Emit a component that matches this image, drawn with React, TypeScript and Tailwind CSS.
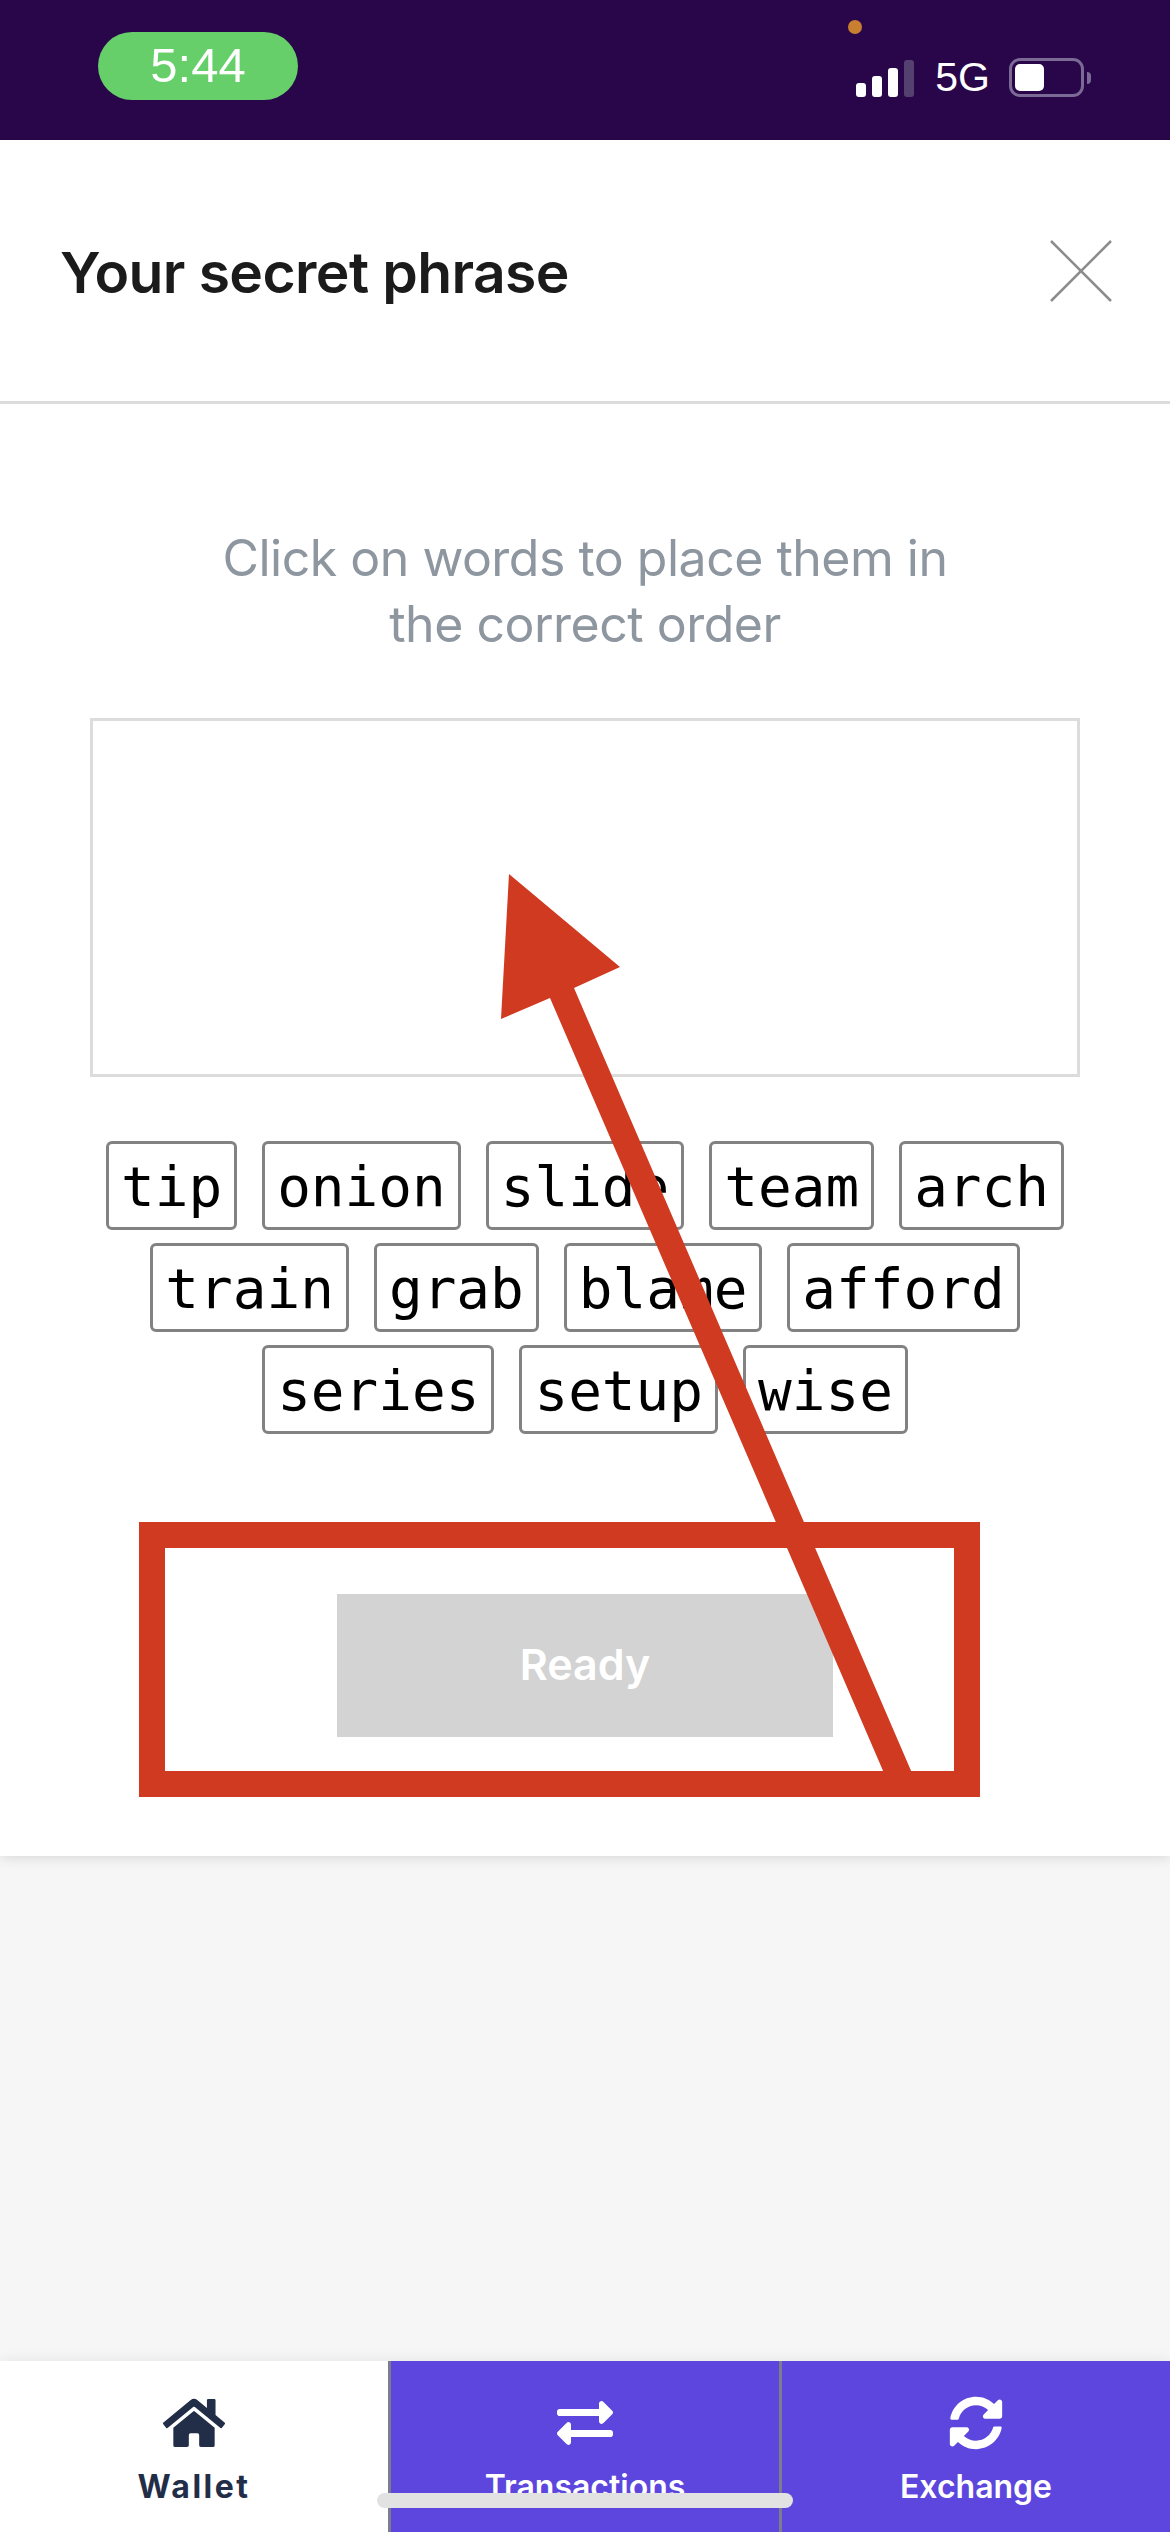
import { FaHome, FaExchangeAlt, FaSyncAlt } from "react-icons/fa";

const words = ["tip", "onion", "slide", "team", "arch", "train", "grab", "blame", "afford", "series", "setup", "wise"];

function NavItem({ icon, label, active }: { icon: React.ReactNode; label: string; active?: boolean }) {
  return (
    <div
      className={
        active
          ? "flex-1 bg-white text-[#222e48] flex flex-col items-center pt-[34px] font-bold tracking-[2.5px]"
          : "flex-1 bg-[#5c46de] text-white flex flex-col items-center pt-[34px] font-semibold border-l-[3px] border-[#7c7c8c]"
      }
    >
      <div className="h-[56px] flex items-center justify-center">{icon}</div>
      <div className="mt-[16px] text-[32px] leading-[40px]">{label}</div>
    </div>
  );
}

export default function App() {
  return (
    <div className="relative w-[1170px] h-[2532px] flex flex-col overflow-hidden bg-[#f6f6f6] font-['Inter',sans-serif]">
      <div className="h-[140px] bg-[#29064a] flex items-start justify-between pl-[98px] pr-[79px] relative">
        <div className="mt-[32px] w-[200px] h-[68px] rounded-[34px] bg-[#66cf6a] text-white flex items-center justify-center text-[49px] font-['Liberation_Sans',sans-serif]">
          5:44
        </div>
        <div className="absolute left-[848px] top-[20px] w-[14px] h-[14px] rounded-full bg-[#c87f30]" />
        <div className="mt-[58px] flex items-center h-[39px]">
          <div className="flex items-end gap-[6px] h-[37px] mt-[1px]">
            <div className="w-[10px] h-[14px] rounded-[3px] bg-white" />
            <div className="w-[10px] h-[21px] rounded-[3px] bg-white" />
            <div className="w-[10px] h-[29px] rounded-[3px] bg-white" />
            <div className="w-[10px] h-[37px] rounded-[3px] bg-[#54416f]" />
          </div>
          <div className="ml-[21px] text-white text-[41px] leading-[39px] font-['Liberation_Sans',sans-serif]">5G</div>
          <div className="ml-[19px] w-[75px] h-[39px] rounded-[11px] border-[3px] border-[#7a6a95] p-[3px]">
            <div className="w-[29px] h-full rounded-[5px] bg-white" />
          </div>
          <div className="ml-[3px] w-[4px] h-[12px] rounded-r-[4px] bg-[#7a6a95]" />
        </div>
      </div>

      <div className="flex-1">
        <div className="h-[1716px] bg-white shadow-[0_2px_12px_rgba(0,0,0,0.12)] flex flex-col">
          <div className="h-[264px] border-b-[3px] border-[#dcdcdc] flex items-center justify-between pl-[60px] pr-[58px] shrink-0">
            <div className="text-[#1b1b1b] text-[57px] font-semibold tracking-[-0.6px] pt-[5px]">Your secret phrase</div>
            <svg width="62" height="62" viewBox="0 0 62 62" className="block">
              <path d="M1 1 L61 61 M61 1 L1 61" stroke="#8c8c8c" strokeWidth="2.5" fill="none" />
            </svg>
          </div>
          <div className="flex flex-col items-center">
            <div className="mt-[121px] text-center text-[#8e96a0] text-[50px] leading-[66px] tracking-[-0.5px]">
              Click on words to place them in
              <br />
              the correct order
            </div>
            <div className="mt-[61px] w-[990px] h-[359px] border-[3px] border-[#dcdcdc]" />
            <div className="mt-[64px] w-[990px] flex flex-wrap justify-center gap-x-[25px] gap-y-[13px]">
              {words.map((w) => (
                <div
                  key={w}
                  className="h-[89px] px-[12px] pt-[3px] border-[3px] border-[#828282] rounded-[6px] flex items-center text-black text-[56px] font-['DejaVu_Sans_Mono',monospace]"
                >
                  {w}
                </div>
              ))}
            </div>
            <div className="mt-[160px] w-[496px] h-[143px] pb-[2px] bg-[#d3d3d3] text-white text-[43px] font-semibold flex items-center justify-center">
              Ready
            </div>
          </div>
        </div>
      </div>

      <div className="h-[171px] flex shadow-[0_-2px_12px_rgba(0,0,0,0.06)]">
        <NavItem active label="Wallet" icon={<FaHome size={62} />} />
        <NavItem label="Transactions" icon={<FaExchangeAlt size={56} />} />
        <NavItem label="Exchange" icon={<FaSyncAlt size={54} />} />
      </div>

      <div className="absolute left-[377px] top-[2493px] w-[416px] h-[15px] rounded-full bg-[#e2e2e2]" />

      <div className="absolute left-[139px] top-[1522px] w-[841px] h-[275px] border-[26px] border-[#d03a20]" />
      <svg className="absolute left-0 top-0 pointer-events-none" width="1170" height="2532" viewBox="0 0 1170 2532">
        <polygon points="509,874 620,967 574,988 915,1780 887,1780 550,998 501,1019" fill="#d03a20" />
      </svg>
    </div>
  );
}
